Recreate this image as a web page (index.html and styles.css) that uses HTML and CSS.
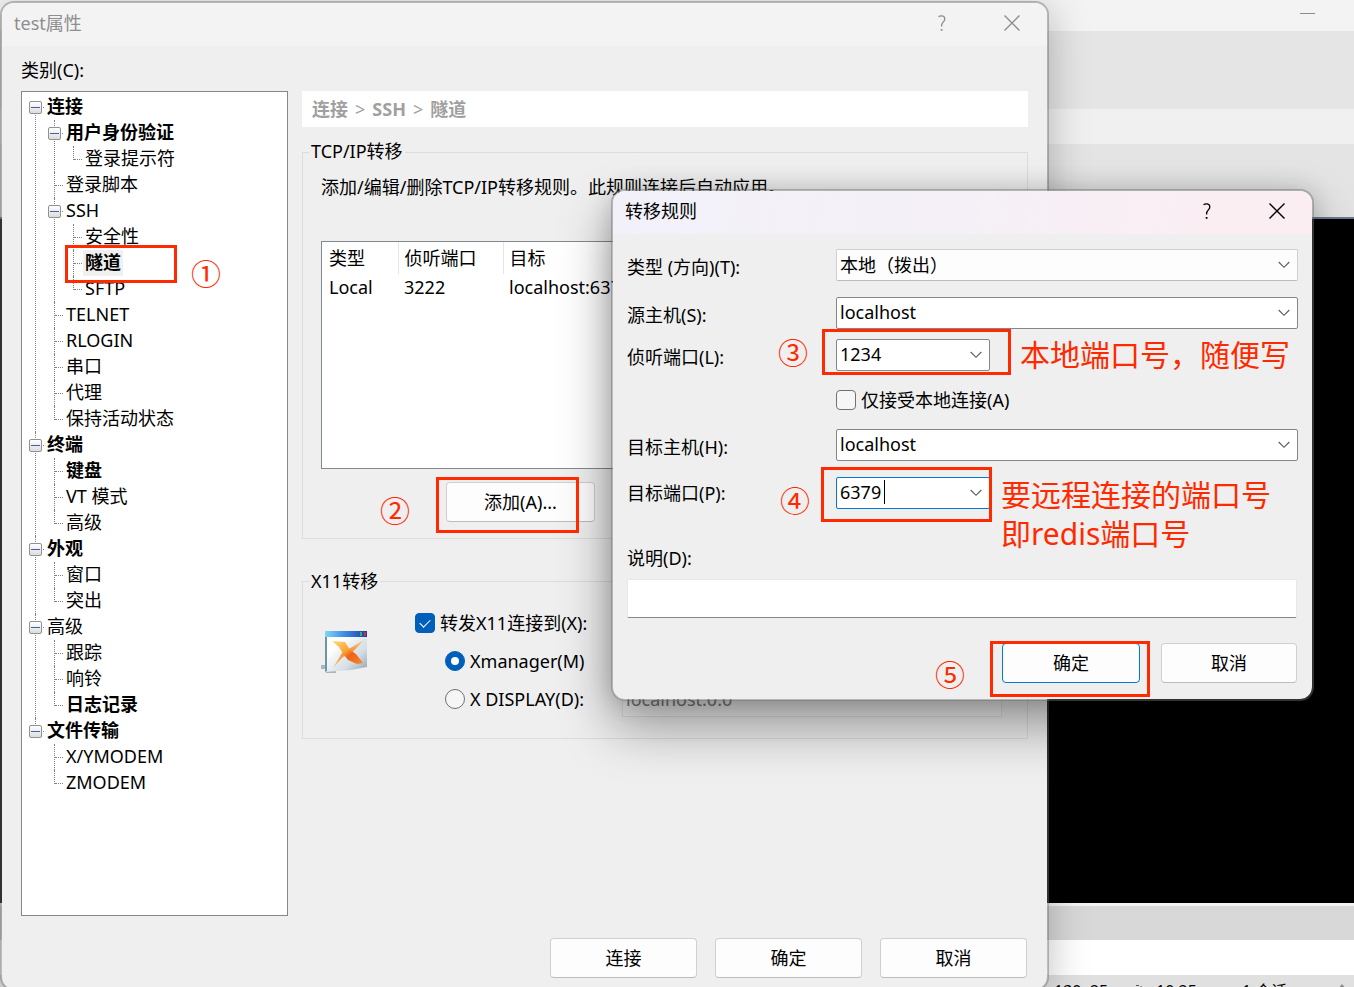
FILE: index.html
```html
<!DOCTYPE html>
<html lang="zh-CN">
<head>
<meta charset="utf-8">
<title>test属性</title>
<link rel="stylesheet" href="styles.css">
</head>
<body>
<svg class="defs" aria-hidden="true">
  <symbol id="i-close" viewBox="0 0 16 16"><path d="M0.5 0.5 15.5 15.5M15.5 0.5 0.5 15.5" fill="none" stroke="currentColor" stroke-width="1.4"/></symbol>
  <symbol id="i-help" viewBox="0 0 8 16"><path d="M0.6 1.8C2 0.4 6.8 0 6.8 3.9 6.8 6.8 3.6 7 3.6 10.6V11.4" fill="none" stroke="currentColor" stroke-width="1.3"/><path d="M2.7 14h1.8v1.8H2.7z" fill="currentColor"/></symbol>
  <symbol id="i-chevron" viewBox="0 0 12 8"><path d="M0.7 1 6 6.3 11.3 1" fill="none" stroke="currentColor" stroke-width="1.1"/></symbol>
</svg>

<div class="desktop">
  <div class="app">
    <div class="app-title"><button class="minimize" aria-label="最小化"></button></div>
    <div class="app-menu"></div>
    <div class="app-tools"></div>
    <div class="app-tabs"></div>
    <div class="app-terminal"></div>
    <div class="app-split"></div>
    <div class="app-compose"></div>
    <div class="app-status">
      <span class="st-size">130x25</span>
      <svg class="st-icon" viewBox="0 0 8 16"><path d="M0 2.500H3M5 3V8" fill="none" stroke="#555" stroke-width="1"/></svg>
      <span class="st-pos">10,25</span>
      <span>1 会话</span>
      <svg class="st-up" viewBox="0 0 8 6"><path d="M4 0 8 5H0Z" fill="#888"/></svg>
    </div>
  </div>

  <section class="window main" aria-label="test属性">
    <header class="titlebar">
      <h1 class="title">test属性</h1>
      <button class="cap" aria-label="帮助"><svg class="q"><use href="#i-help"/></svg></button>
      <button class="cap" aria-label="关闭"><svg class="x"><use href="#i-close"/></svg></button>
    </header>

    <div class="body">
      <div class="category" id="cat">类别(C):</div>
      <nav class="treebox" aria-labelledby="cat">
        <ul class="tree">
          <li><div class="row"><button class="exp" aria-label="折叠"></button><b class="label">连接</b></div>
            <ul>
              <li><div class="row"><button class="exp" aria-label="折叠"></button><b class="label">用户身份验证</b></div>
                <ul><li><div class="row"><span class="label">登录提示符</span></div></li></ul>
              </li>
              <li><div class="row"><span class="label">登录脚本</span></div></li>
              <li><div class="row"><button class="exp" aria-label="折叠"></button><span class="label">SSH</span></div>
                <ul>
                  <li><div class="row"><span class="label">安全性</span></div></li>
                  <li><div class="row"><b class="label selected">隧道</b></div></li>
                  <li><div class="row"><span class="label">SFTP</span></div></li>
                </ul>
              </li>
              <li><div class="row"><span class="label">TELNET</span></div></li>
              <li><div class="row"><span class="label">RLOGIN</span></div></li>
              <li><div class="row"><span class="label">串口</span></div></li>
              <li><div class="row"><span class="label">代理</span></div></li>
              <li><div class="row"><span class="label">保持活动状态</span></div></li>
            </ul>
          </li>
          <li><div class="row"><button class="exp" aria-label="折叠"></button><b class="label">终端</b></div>
            <ul>
              <li><div class="row"><b class="label">键盘</b></div></li>
              <li><div class="row"><span class="label">VT 模式</span></div></li>
              <li><div class="row"><span class="label">高级</span></div></li>
            </ul>
          </li>
          <li><div class="row"><button class="exp" aria-label="折叠"></button><b class="label">外观</b></div>
            <ul>
              <li><div class="row"><span class="label">窗口</span></div></li>
              <li><div class="row"><span class="label">突出</span></div></li>
            </ul>
          </li>
          <li><div class="row"><button class="exp" aria-label="折叠"></button><span class="label">高级</span></div>
            <ul>
              <li><div class="row"><span class="label">跟踪</span></div></li>
              <li><div class="row"><span class="label">响铃</span></div></li>
              <li><div class="row"><b class="label">日志记录</b></div></li>
            </ul>
          </li>
          <li><div class="row"><button class="exp" aria-label="折叠"></button><b class="label">文件传输</b></div>
            <ul>
              <li><div class="row"><span class="label">X/YMODEM</span></div></li>
              <li><div class="row"><span class="label">ZMODEM</span></div></li>
            </ul>
          </li>
        </ul>
      </nav>

      <div class="page">
        <div class="crumbs"><b>连接</b><span>&gt;</span><b>SSH</b><span>&gt;</span><b>隧道</b></div>

        <fieldset class="group tcp">
          <legend>TCP/IP转移</legend>
          <p class="desc">添加/编辑/删除TCP/IP转移规则。此规则连接后自动应用。</p>
          <div class="list">
            <table>
              <thead><tr><th class="c-type">类型</th><th class="c-port">侦听端口</th><th>目标</th></tr></thead>
              <tbody><tr><td>Local</td><td>3222</td><td>localhost:6379</td></tr></tbody>
            </table>
          </div>
          <div class="list-actions"><button class="btn add">添加(A)...</button></div>
        </fieldset>

        <fieldset class="group x11">
          <legend>X11转移</legend>
          <div class="x11-grid">
            <svg class="x11-icon" viewBox="0 0 47 44">
              <defs>
                <linearGradient id="gb" x1="0" x2="1"><stop offset="0" stop-color="#7fd8f8"/><stop offset=".45" stop-color="#3f8fe0"/><stop offset="1" stop-color="#1a3cae"/></linearGradient>
                <linearGradient id="gw" x1="0" y1="0" x2="1" y2="1"><stop offset=".3" stop-color="#fff"/><stop offset=".7" stop-color="#d3dde3"/><stop offset="1" stop-color="#8fa3af"/></linearGradient>
                <linearGradient id="go" x1="0" y1="0" x2="1" y2="1"><stop offset="0" stop-color="#ffe07a"/><stop offset=".45" stop-color="#f8a032"/><stop offset=".6" stop-color="#f0601c"/><stop offset="1" stop-color="#f48a2a"/></linearGradient>
                <linearGradient id="gs" x1="1" y1="0" x2="0" y2="1"><stop offset="0" stop-color="#fbc98a"/><stop offset=".5" stop-color="#f58a2c"/><stop offset="1" stop-color="#fbc47c"/></linearGradient>
              </defs>
              <path d="M0 35H5V41H15V43H5L4 39H0Z" fill="#a9b6bd"/>
              <path d="M4 1H46V37L30 40 4 42Z" fill="url(#gw)"/>
              <path d="M4 1H6V41L4 42Z" fill="#6f93a8"/>
              <path d="M4 1H46V7H4Z" fill="url(#gb)"/>
              <path d="M39 2h2v4h-2z" fill="#39b54a"/><path d="M43 2h2v4h-2z" fill="#c8323c"/>
              <path d="M43 10 30 24 22 27 12 38 21 23Z" fill="url(#gs)"/>
              <path d="M11 11 24 12 29 20 35 24 42 33 36 34 27 30 21 22 18 17Z" fill="url(#go)"/>
            </svg>
            <div class="x11-rows">
              <label class="opt"><input type="checkbox" checked>转发X11连接到(X):</label>
              <label class="opt sub"><input type="radio" name="x" checked>Xmanager(M)</label>
              <div class="display">
                <label class="opt sub"><input type="radio" name="x">X DISPLAY(D):</label>
                <input class="disp-input" type="text" value="localhost:0.0" disabled aria-label="X DISPLAY">
              </div>
            </div>
          </div>
        </fieldset>
      </div>
    </div>

    <footer class="footer">
      <button class="btn">连接</button><button class="btn">确定</button><button class="btn">取消</button>
    </footer>
  </section>

  <section class="window rule" aria-label="转移规则">
    <header class="titlebar">
      <h2 class="title">转移规则</h2>
      <button class="cap" aria-label="帮助"><svg class="q"><use href="#i-help"/></svg></button>
      <button class="cap" aria-label="关闭"><svg class="x"><use href="#i-close"/></svg></button>
    </header>
    <form class="form">
      <div class="field spaced">
        <label for="type">类型 (方向)(T):</label>
        <div class="combo flat"><select id="type"><option>本地（拨出）</option></select><svg class="chev"><use href="#i-chevron"/></svg></div>
      </div>
      <div class="field">
        <label for="src">源主机(S):</label>
        <div class="combo"><input id="src" type="text" value="localhost"><button type="button" class="drop" aria-label="展开"><svg class="chev"><use href="#i-chevron"/></svg></button></div>
      </div>
      <div class="field">
        <label for="lport">侦听端口(L):</label>
        <div class="combo short"><input id="lport" type="text" value="1234"><button type="button" class="drop" aria-label="展开"><svg class="chev"><use href="#i-chevron"/></svg></button></div>
      </div>
      <div class="field check-row">
        <label class="opt"><input type="checkbox">仅接受本地连接(A)</label>
      </div>
      <div class="field spaced">
        <label for="dst">目标主机(H):</label>
        <div class="combo"><input id="dst" type="text" value="localhost"><button type="button" class="drop" aria-label="展开"><svg class="chev"><use href="#i-chevron"/></svg></button></div>
      </div>
      <div class="field level">
        <label for="dport">目标端口(P):</label>
        <div class="combo short active"><input id="dport" type="text" value="6379"><i class="caret"></i><button type="button" class="drop" aria-label="展开"><svg class="chev"><use href="#i-chevron"/></svg></button></div>
      </div>
      <label class="note-label" for="note">说明(D):</label>
      <input class="note" id="note" type="text">
      <div class="form-actions">
        <button type="button" class="btn primary">确定</button>
        <button type="button" class="btn">取消</button>
      </div>
    </form>
  </section>

  <div class="marks">
    <div class="mark m1"></div><div class="num n1">①</div>
    <div class="mark m2"></div><div class="num n2">②</div>
    <div class="mark m3"></div><div class="num n3">③</div>
    <div class="mark m4"></div><div class="num n4">④</div>
    <div class="mark m5"></div><div class="num n5">⑤</div>
    <p class="say s3">本地端口号，随便写</p>
    <p class="say s4">要远程连接的端口号<br>即redis端口号</p>
  </div>
</div>
</body>
</html>
```
FILE: styles.css
```css
* { box-sizing: border-box; }
body {
  margin: 0;
  overflow: hidden;
  font: 18px/26px "Noto Sans", "Noto Sans CJK SC", sans-serif;
  color: #000;
}
button, input, select { font: inherit; color: inherit; margin: 0; }
button { padding: 0; border: 0; background: none; }
h1, h2, p { margin: 0; font-size: 18px; font-weight: 400; }
.defs { display: none; }

.desktop { position: relative; height: 100vh; overflow: hidden; }

/* application behind the dialogs */
.app { display: flex; flex-direction: column; height: 100%; }
.app-title { height: 31px; flex: none; background: #f3f3f3; display: flex; justify-content: flex-end; padding-right: 39px; }
.minimize { width: 15px; height: 14px; border-bottom: 1px solid #8c8c8c; }
.app-menu { height: 78px; flex: none; background: #e5e5e5; }
.app-tools { height: 35px; flex: none; background: #f0f0f0; }
.app-tabs { height: 75px; flex: none; background: #e4e4e4; border-bottom: 2px solid #6b7890; }
.app-terminal { flex: 1; background: #000; }
.app-split { height: 37px; flex: none; background: #d8d8d8; border-top: 3px solid #f3f3f3; }
.app-compose { height: 35px; flex: none; background: #fff; }
.app-status {
  height: 12px; flex: none; overflow: hidden;
  display: flex; align-items: flex-start; padding: 4px 8px 0 1054px;
  background: #e0e0e0; font-size: 16px; line-height: 24px; white-space: nowrap;
}
.st-size { width: 82px; flex: none; }
.st-icon { width: 8px; height: 16px; margin: 4px 12px 0 0; flex: none; }
.st-pos { width: 86px; flex: none; }
.st-up { width: 8px; height: 6px; margin: 5px 0 0 auto; flex: none; }

/* windows */
.window {
  position: absolute;
  display: flex; flex-direction: column;
  border: 2px solid rgba(110, 110, 110, .45);
  border-radius: 14px;
  background: #efefef padding-box;
}
.main { left: 0; right: 305px; top: 1px; bottom: -4px; box-shadow: 0 8px 40px rgba(0, 0, 0, .26); }
.rule { left: 611px; right: 40px; top: 189px; box-shadow: 0 26px 52px rgba(0, 0, 0, .38), 0 0 24px rgba(0, 0, 0, .16); }
.titlebar { display: flex; height: 43px; padding: 0 0 3px 12px; align-items: center; border-radius: 12px 12px 0 0; }
.main .titlebar { background: #f3f3f3; color: #8e8e8e; }
.rule .titlebar { background: linear-gradient(100deg, #f2f1f9, #f5f0f7 50%, #faeef3 85%); }
.title { flex: 1; }
.cap { width: 70px; height: 40px; display: grid; place-items: center; }
.x { width: 16px; height: 16px; }
.q { width: 8px; height: 16px; }

.body { flex: 1; display: grid; grid-template-columns: 267px 1fr; grid-template-rows: 33px 1fr; column-gap: 14px; padding: 12px 19px 0; }
.category { grid-column: 1 / -1; line-height: 24px; }
.treebox { border: 1px solid #828790; background: #fff; padding: 2px 7px; }

/* tree */
.tree, .tree ul { list-style: none; margin: 0; padding: 0; }
.tree ul { padding-left: 19px; }
.tree li { position: relative; }
.tree li::before { content: ""; position: absolute; left: 6px; top: 0; bottom: 0; border-left: 1px dotted #808080; }
.tree li:last-child::before { bottom: auto; height: 14px; }
.tree > li:first-child::before { top: 13px; }
.row { position: relative; display: flex; align-items: center; height: 26px; padding-left: 16px; }
.row::before { content: ""; position: absolute; left: 7px; top: 13px; width: 8px; border-top: 1px dotted #808080; }
.exp { position: absolute; left: 0; top: 7px; width: 13px; height: 13px; border: 1px solid #919191; border-radius: 2px; background: linear-gradient(#fff, #dcdcdc); }
.exp::before { content: ""; display: block; width: 9px; height: 1px; margin: 0 1px; background: #4060a8; }
.label { height: 26px; padding: 0 2px; line-height: 24px; }
.selected { background: #f0f0f0; }

/* page */
.crumbs { display: flex; gap: 7px; height: 36px; padding: 5px 10px; background: #fff; color: #a0a0a0; }
.group { min-width: 0; margin: 12px 0 0; padding: 10px 18px 16px; border: 1px solid #dcdcdc; }
.group legend { height: 26px; margin-left: -12px; padding: 0 2px; line-height: 24px; }
.x11 { margin-top: 29px; padding: 13px 18px 21px; }
.x11 legend { line-height: 26px; }
.desc { height: 26px; margin-bottom: 40px; line-height: 24px; white-space: nowrap; }
.list { height: 228px; border: 1px solid #828790; background: #fff; }
.list table { width: 100%; border-collapse: collapse; table-layout: fixed; }
.list th { height: 32px; padding: 0 6px; border-right: 1px solid #e5e5e5; text-align: left; font-weight: 400; }
.list th:last-child { border-right: 0; }
.list td { height: 26px; padding: 0 6px; }
.list th:first-child, .list td:first-child { padding-left: 7px; }
.c-type { width: 76px; }
.c-port { width: 105px; }
.list-actions { margin: 13px 0 0 125px; }

.btn { height: 40px; border: 1px solid #d0d0d0; border-bottom-color: #bcbcbc; border-radius: 4px; background: #fdfdfd; }
.add { width: 149px; }
.primary { border-color: #0078d4; }

.x11-grid { display: flex; }
.x11-icon { width: 47px; height: 44px; margin: 23px 47px 0 0; flex: none; }
.x11-rows { flex: 1; display: flex; flex-direction: column; gap: 6px; }
.opt { display: flex; align-items: center; gap: 5px; height: 32px; white-space: nowrap; }
.sub { margin-left: 30px; }
.display { display: flex; }
.display .opt { width: 177px; }
.disp-input { width: 380px; height: 34px; padding: 0 3px 3px; border: 1px solid #e0e0e0; background: #f3f3f3; color: #7a7a7a; }

.opt input { appearance: none; width: 20px; height: 20px; border: 1px solid #707070; background: #f6f6f6; flex: none; }
.opt input[type="checkbox"] { border-radius: 4px; }
.opt input[type="radio"] { border-radius: 50%; }
.opt input:checked { border-color: #005fb8; background: #005fb8; display: grid; place-items: center; }
.opt input[type="checkbox"]:checked::before { content: ""; width: 9px; height: 5px; margin-bottom: 3px; border: solid #fff; border-width: 0 0 1px 1px; transform: rotate(-45deg); }
.opt input[type="radio"]:checked::before { content: ""; width: 8px; height: 8px; border-radius: 50%; background: #fff; }

.footer { display: flex; justify-content: flex-end; gap: 18px; padding: 22px 20px 11px; }
.footer .btn { width: 147px; }

/* forwarding rule form */
.form { display: flex; flex-direction: column; gap: 10px; padding: 15px 14px 16px; }
.field { display: grid; grid-template-columns: 209px 1fr; align-items: center; }
.field > label { padding-top: 4px; }
.spaced { margin-bottom: 6px; }
.level > label { padding: 0; }
.check-row { height: 38px; }
.check-row .opt { grid-column: 2; padding: 0; }
.combo { position: relative; display: flex; height: 32px; border: 1px solid #868686; border-radius: 2px; background: #fff; }
.combo.flat { border-color: #d0d0d0; border-bottom-color: #bcbcbc; background: #fdfdfd; }
.combo.short { width: 154px; }
.combo.active { border-color: #0078d4; }
.combo input, .combo select { flex: 1; min-width: 0; width: 100%; padding: 0 3px; border: 0; outline: 0; background: none; appearance: none; }
.combo input { padding-bottom: 2px; }
.drop { width: 26px; display: grid; place-items: center; }
.chev { width: 12px; height: 8px; color: #5a5a5a; }
.flat .chev { position: absolute; right: 7px; top: 11px; }
.caret { position: absolute; left: 47px; top: 2px; width: 1px; height: 24px; background: #000; }
.form > .note-label { margin: 26px 0 -2px; }
.note { height: 39px; margin: 0 1px 15px 0; border: 1px solid #e8e8e8; border-bottom-color: #868686; border-radius: 2px; background: #fff; }
.form-actions { display: flex; justify-content: flex-end; gap: 21px; padding-right: 1px; }
.form-actions .btn { width: 136px; }
.form-actions .primary { width: 138px; }

/* red annotations drawn over the windows */
.marks { position: absolute; inset: 0; pointer-events: none; color: #ff2a00; }
.mark { position: absolute; border: 3px solid #ff2a00; }
.num, .say { position: absolute; white-space: nowrap; font-size: 30px; line-height: 39px; }
.num { width: 30px; font-family: "Noto Sans CJK SC", sans-serif; }
.m1 { left: 65px; top: 245px; width: 112px; height: 38px; }
.m2 { left: 436px; top: 477px; width: 143px; height: 56px; }
.m3 { left: 822px; top: 329px; width: 189px; height: 46px; }
.m4 { left: 821px; top: 467px; width: 171px; height: 55px; }
.m5 { left: 990px; top: 641px; width: 160px; height: 56px; }
.n1 { left: 191px; top: 253px; }
.n2 { left: 380px; top: 490px; }
.n3 { left: 778px; top: 332px; }
.n4 { left: 780px; top: 480px; }
.n5 { left: 935px; top: 654px; }
.s3 { left: 1020px; top: 335px; }
.s4 { left: 1001px; top: 475px; }
```
